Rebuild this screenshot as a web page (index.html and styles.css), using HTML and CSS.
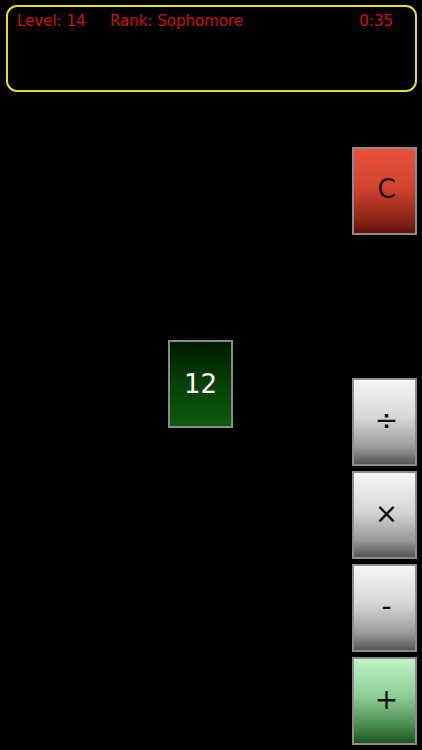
FILE: index.html
```html
<!DOCTYPE html>
<html>
<head>
<meta charset="utf-8">
<link rel="stylesheet" href="styles.css">
</head>
<body>
<div class="hud">
  <div class="hud-line">
    <span class="level">Level: 14</span>
    <span class="rank">Rank: Sophomore</span>
    <span class="time">0:35</span>
  </div>
</div>
<div class="board">
  <div class="play">
    <div class="card">12</div>
  </div>
  <div class="keys">
    <div class="key clear">C</div>
    <div class="ops">
      <div class="key op">÷</div>
      <div class="key op">×</div>
      <div class="key op">-</div>
      <div class="key plus">+</div>
    </div>
  </div>
</div>
</body>
</html>
```
FILE: styles.css
```css
html, body {
  margin: 0;
  padding: 0;
  background: #000;
  width: 422px;
  height: 750px;
  overflow: hidden;
  font-family: "DejaVu Sans", Verdana, sans-serif;
}
.hud {
  margin: 5px 5px 0 6px;
  height: 83px;
  border: 2px solid #e6dd2a;
  border-radius: 11px;
  box-sizing: content-box;
}
.hud-line {
  display: flex;
  align-items: baseline;
  padding: 5px 0 0 9px;
  color: #d40d0d;
  font-size: 15px;
  line-height: 18px;
}
.level { width: 93px; }
.rank { flex: 1; }
.time { margin-right: 22px; }
.board {
  display: flex;
}
.play {
  flex: 1;
  padding: 248px 0 0 168px;
}
.card {
  width: 61px;
  height: 84px;
  border: 2px solid #8a8a8a;
  background: linear-gradient(#001a00, #064006 50%, #0c5c0c);
  color: #fff;
  font-size: 26px;
  display: flex;
  align-items: center;
  justify-content: center;
  box-sizing: content-box;
}
.keys {
  width: 65px;
  margin-right: 5px;
  padding-top: 55px;
  display: flex;
  flex-direction: column;
}
.ops {
  margin-top: 143px;
  display: flex;
  flex-direction: column;
  gap: 5px;
}
.key {
  width: 61px;
  height: 84px;
  border: 2px solid #8c8c8c;
  display: flex;
  align-items: center;
  justify-content: center;
  font-size: 28px;
  color: #111;
  box-sizing: border-box;
  width: 65px;
  height: 88px;
  padding: 0 0 4px 4px;
}
.clear {
  background: linear-gradient(#ec523c, #d24430 45%, #8a2416 85%, #5e130a);
  color: #1c0906;
  font-size: 26px;
}
.op {
  background: linear-gradient(#f6f6f6, #d6d6d6 45%, #9a9a9a 80%, #555);
}
.plus {
  background: linear-gradient(#bff5c8, #8ccb93 45%, #4a8a4e 80%, #1c541e);
}
```
